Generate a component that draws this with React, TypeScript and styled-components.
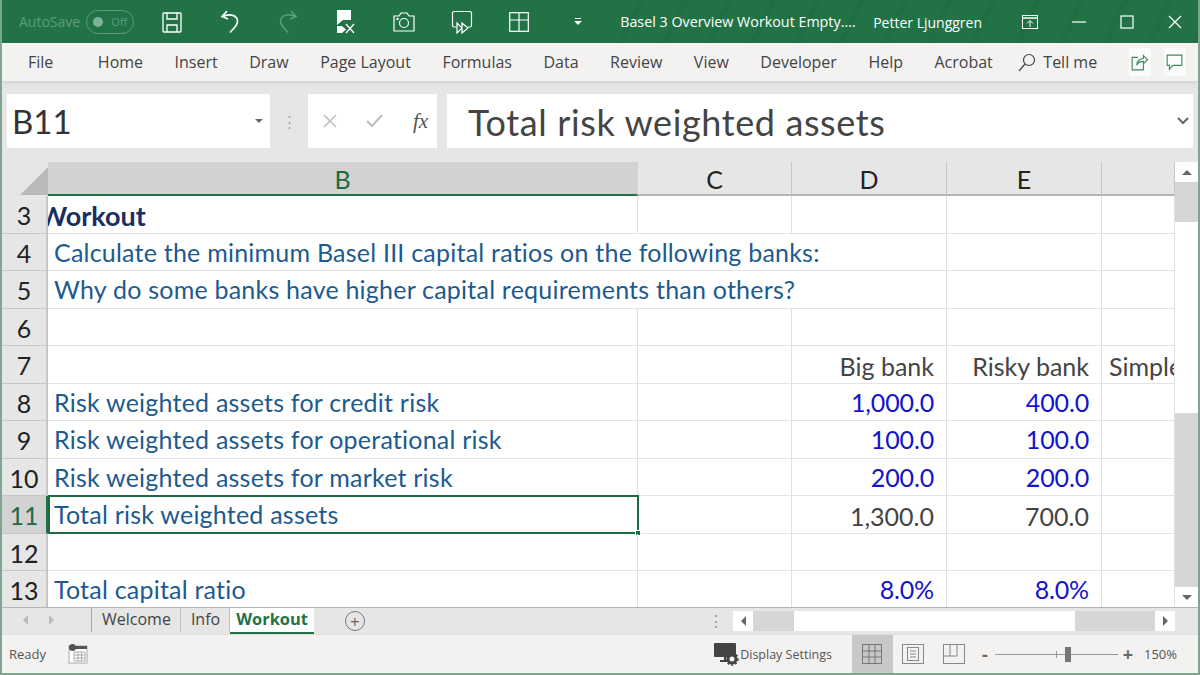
import styled, { createGlobalStyle } from "styled-components";

const GRID = "46px 590px 154px 155px 155px 73px";
const CELL_FONT = `"Lato", "Liberation Sans", sans-serif`;
const UI_FONT = `"Open Sans", "Noto Sans", sans-serif`;

const GlobalStyle = createGlobalStyle`
  html, body { margin: 0; padding: 0; background: #e6e6e6; }
  * { box-sizing: border-box; }
`;

const rows = [
  { n: "3", b: "Workout", kind: "title" },
  { n: "4", b: "Calculate the minimum Basel III capital ratios on the following banks:", wide: true },
  { n: "5", b: "Why do some banks have higher capital requirements than others?", wide: true },
  { n: "6" },
  { n: "7", d: "Big bank", e: "Risky bank", f: "Simple", plain: true },
  { n: "8", b: "Risk weighted assets for credit risk", d: "1,000.0", e: "400.0", input: true },
  { n: "9", b: "Risk weighted assets for operational risk", d: "100.0", e: "100.0", input: true },
  { n: "10", b: "Risk weighted assets for market risk", d: "200.0", e: "200.0", input: true },
  { n: "11", b: "Total risk weighted assets", d: "1,300.0", e: "700.0", plain: true, selected: true },
  { n: "12" },
  { n: "13", b: "Total capital ratio", d: "8.0%", e: "8.0%", input: true },
];

const tabs = ["Home", "Insert", "Draw", "Page Layout", "Formulas", "Data", "Review", "View", "Developer", "Help", "Acrobat"];

const App = () => {
  return (
    <Window>
      <GlobalStyle />
      <TitleBar>
        <AutoSave>AutoSave</AutoSave>
        <Toggle>
          <ToggleDot />
          Off
        </Toggle>
        <QuickIcons>
          <svg width="22" height="24" viewBox="0 0 22 24" fill="none" stroke="#fff" strokeWidth="1.3">
            <rect x="2" y="3" width="18" height="19" rx="1" />
            <path d="M6 3v6h10V3M6 22v-7h10v7M6 15h10" />
          </svg>
          <svg width="22" height="26" viewBox="0 0 22 26" fill="none" stroke="#fff" strokeWidth="1.6">
            <path d="M8 2 3 7.5l6 2.5M3.5 7.5c6-3 14-2 15 4 .6 4-3 7-7.500 12" />
          </svg>
          <svg width="22" height="26" viewBox="0 0 22 26" fill="none" stroke="#5c9e7c" strokeWidth="1.5">
            <path d="M14 2l5 5.500-6 2.500M18.500 7.500c-6-3-14-2-15 4-.6 4 3 7 7.500 12" />
          </svg>
          <svg width="22" height="26" viewBox="0 0 22 26" fill="none">
            <path d="M2 1h14v10H8l-6 5z" fill="#fff" />
            <path d="M2 17h5l4 3.500-4 3.500H2z" fill="#fff" />
            <path d="M11 15l8 9M19 15l-8 9" stroke="#fff" strokeWidth="1.300" />
          </svg>
          <svg width="22" height="20" viewBox="0 0 22 20" fill="none" stroke="#fff" strokeWidth="1.200">
            <path d="M1 4h5l2-3h6l2 3h5v15H1z" />
            <circle cx="11" cy="11" r="4.500" />
            <circle cx="4.500" cy="7" r="0.600" />
          </svg>
          <svg width="22" height="24" viewBox="0 0 22 24" fill="none" stroke="#fff" strokeWidth="1.200">
            <path d="M6 17H3a1.500 1.500 0 0 1-1.500-1.500V3A1.500 1.500 0 0 1 3 1.500h16A1.500 1.500 0 0 1 20.500 3v12.500A1.500 1.500 0 0 1 19 17h-2" />
            <path d="M6 13v10l5-5zM11 13v10l6-5z" />
          </svg>
          <svg width="20" height="20" viewBox="0 0 20 20" fill="none" stroke="#fff" strokeWidth="1.200">
            <rect x="0.700" y="0.700" width="18.600" height="18.600" />
            <path d="M10 1v18M1 8h18" />
          </svg>
          <DropIcon width="8" height="8" viewBox="0 0 8 8" fill="#fff">
            <path d="M1 0h6v1H1zM0 3h8L4 7z" />
          </DropIcon>
        </QuickIcons>
        <DocTitle>Basel 3 Overview Workout Empty....</DocTitle>
        <UserName>Petter Ljunggren</UserName>
        <WindowControls>
          <svg width="16" height="14" viewBox="0 0 16 14" fill="none" stroke="#fff" strokeWidth="1">
            <rect x="0.500" y="0.500" width="15" height="13" />
            <path d="M1 3h14" strokeWidth="1.500" />
            <path d="M8 12V6M5 8.500 8 5.500l3 3" />
          </svg>
          <svg width="14" height="14" viewBox="0 0 14 14" stroke="#fff" strokeWidth="1.200">
            <path d="M0 7h14" />
          </svg>
          <svg width="14" height="14" viewBox="0 0 14 14" fill="none" stroke="#fff" strokeWidth="1.200">
            <rect x="1" y="1" width="12" height="12" />
          </svg>
          <svg width="14" height="14" viewBox="0 0 14 14" stroke="#fff" strokeWidth="1.200">
            <path d="M1 1l12 12M13 1 1 13" />
          </svg>
        </WindowControls>
      </TitleBar>

      <TabBar>
        <FileTab>File</FileTab>
        {tabs.map((t) => (
          <Tab key={t}>{t}</Tab>
        ))}
        <TellMe>
          <svg width="18" height="19" viewBox="0 0 18 19" fill="none" stroke="#444" strokeWidth="1.200">
            <circle cx="11" cy="7" r="5.500" />
            <path d="M7 11 1 18" />
          </svg>
          Tell me
        </TellMe>
        <RibbonButtons>
          <RibbonButton>
            <svg width="17" height="17" viewBox="0 0 15 15" fill="none" stroke="#3f8a63" strokeWidth="1">
              <path d="M6 3H1v11h10V9" />
              <path d="M5 10c0-4 3-6 6-6V1.500l3.500 3.500L11 8.500V6.500c-3 0-5 1-6 3.500z" />
            </svg>
          </RibbonButton>
          <RibbonButton>
            <svg width="17" height="17" viewBox="0 0 15 15" fill="none" stroke="#3f8a63" strokeWidth="1">
              <path d="M1 1h13v9H6l-3 3.500V10H1z" />
            </svg>
          </RibbonButton>
        </RibbonButtons>
      </TabBar>

      <FormulaBar>
        <NameBox>
          B11
          <Caret />
        </NameBox>
        <Dots>⋮</Dots>
        <FormulaActions>
          <svg width="14" height="14" viewBox="0 0 14 14" stroke="#bdbdbd" strokeWidth="1.500">
            <path d="M1 1l12 12M13 1 1 13" />
          </svg>
          <svg width="18" height="14" viewBox="0 0 18 14" fill="none" stroke="#bdbdbd" strokeWidth="2">
            <path d="M1 7l5 5L16 1" />
          </svg>
          <Fx>fx</Fx>
        </FormulaActions>
        <FormulaInput>
          <FormulaText>Total risk weighted assets</FormulaText>
          <svg width="12" height="8" viewBox="0 0 12 8" fill="none" stroke="#666" strokeWidth="2">
            <path d="M1 1l5 5 5-5" />
          </svg>
        </FormulaInput>
      </FormulaBar>

      <SheetArea>
        <Sheet>
          <HeaderRow>
            <Corner>
              <svg width="28" height="28" viewBox="0 0 28 28">
                <path d="M28 0v28H0z" fill="#b9b9b9" />
              </svg>
            </Corner>
            <ColHead $active>B</ColHead>
            <ColHead>C</ColHead>
            <ColHead>D</ColHead>
            <ColHead>E</ColHead>
            <ColHead />
          </HeaderRow>
          <Body>
            {rows.map((r) => (
              <Row key={r.n}>
                <RowHead $active={r.selected}>{r.n}</RowHead>
                <BCell $span={r.wide ? 3 : 1} $clip={r.kind === "title"} $selected={r.selected}>
                  {r.kind === "title" ? <SheetTitle>{r.b}</SheetTitle> : <Label>{r.b}</Label>}
                  {r.selected && <FillHandle />}
                </BCell>
                {!r.wide && <Cell />}
                {!r.wide && (
                  <NumCell $input={r.input} $plain={r.plain}>
                    {r.d}
                  </NumCell>
                )}
                <NumCell $input={r.input} $plain={r.plain}>
                  {r.e}
                </NumCell>
                <LastCell $plain={r.plain}>{r.f}</LastCell>
              </Row>
            ))}
          </Body>
        </Sheet>
        <VScroll>
          <ScrollBtn>
            <UpArrow />
          </ScrollBtn>
          <VTrackTop />
          <VThumb />
          <VTrackBottom />
          <ScrollBtn>
            <DownArrow />
          </ScrollBtn>
        </VScroll>
      </SheetArea>

      <SheetTabs>
        <NavArrows>
          <LeftArrow $light />
          <RightArrow $light />
        </NavArrows>
        <SheetTab>Welcome</SheetTab>
        <SheetTab>Info</SheetTab>
        <ActiveSheetTab>Workout</ActiveSheetTab>
        <AddSheet>+</AddSheet>
        <Spacer />
        <HDots>⋮</HDots>
        <HScrollBtn>
          <LeftArrow />
        </HScrollBtn>
        <HTrack>
          <HThumb />
        </HTrack>
        <HScrollBtn>
          <RightArrow />
        </HScrollBtn>
      </SheetTabs>

      <StatusBar>
        <Ready>Ready</Ready>
        <svg width="20" height="20" viewBox="0 0 20 20">
          <rect x="1" y="2" width="18" height="17" fill="#fff" stroke="#aaa" />
          <rect x="1" y="2" width="18" height="3" fill="#555" />
          <circle cx="4.500" cy="3.500" r="3.500" fill="#555" />
          <path d="M6 8h11v9H6zM6 11h11M6 14h11M10 8v9M13.500 8v9" stroke="#999" fill="none" strokeWidth="0.800" />
        </svg>
        <Spacer />
        <DisplaySettings>
          <svg width="26" height="24" viewBox="0 0 26 24">
            <rect x="0" y="1" width="22" height="14" rx="1" fill="#444" />
            <path d="M6 19h10M11 15v4" stroke="#444" strokeWidth="2" />
            <circle cx="18" cy="17" r="4" fill="#f3f2f1" stroke="#444" strokeWidth="3" />
            <circle cx="18" cy="17" r="6" fill="none" stroke="#444" strokeWidth="1.500" strokeDasharray="2 2" />
          </svg>
          Display Settings
        </DisplaySettings>
        <ViewButton $active>
          <svg width="20" height="20" viewBox="0 0 20 20" fill="none" stroke="#777" strokeWidth="1">
            <rect x="0.500" y="0.500" width="19" height="19" />
            <path d="M7 0v20M13 0v20M0 7h20M0 13h20" />
          </svg>
        </ViewButton>
        <ViewButton>
          <svg width="22" height="20" viewBox="0 0 22 20" fill="none" stroke="#888" strokeWidth="1">
            <rect x="0.500" y="0.500" width="21" height="19" />
            <rect x="5.500" y="3.500" width="11" height="13" />
            <path d="M8 7h6M8 10h6M8 13h6" />
          </svg>
        </ViewButton>
        <ViewButton>
          <svg width="22" height="20" viewBox="0 0 22 20" fill="none" stroke="#888" strokeWidth="1">
            <rect x="0.500" y="0.500" width="21" height="19" />
            <path d="M0 12h14V0M7 0v12" />
          </svg>
        </ViewButton>
        <ZoomOut>-</ZoomOut>
        <ZoomSlider>
          <ZoomTick />
          <ZoomKnob />
        </ZoomSlider>
        <ZoomSign>+</ZoomSign>
        <ZoomValue>150%</ZoomValue>
      </StatusBar>
    </Window>
  );
};

const Window = styled.div`
  width: 1200px;
  height: 675px;
  overflow: hidden;
  display: flex;
  flex-direction: column;
  background: #e6e6e6;
  border-left: 2px solid #7ea58f;
  border-right: 2px solid #7ea58f;
  border-bottom: 2px solid #7ea58f;
  font-family: ${UI_FONT};
`;

const TitleBar = styled.div`
  height: 43px;
  margin: 0 -2px;
  flex: none;
  display: flex;
  align-items: center;
  padding-left: 19px;
  color: #fff;
  background:
    repeating-linear-gradient(115deg, transparent 0 34px, rgba(0, 0, 0, 0.035) 34px 40px) right / 600px 100% no-repeat,
    #217346;
`;

const AutoSave = styled.span`
  font-size: 14px;
  color: #5d9c7b;
`;

const Toggle = styled.div`
  display: flex;
  align-items: center;
  justify-content: space-between;
  width: 48px;
  height: 24px;
  margin-left: 6px;
  padding: 0 6px 0 6px;
  border: 1px solid #5d9c7b;
  border-radius: 12px;
  font-size: 11px;
  color: #5d9c7b;
`;

const ToggleDot = styled.span`
  width: 10px;
  height: 10px;
  border-radius: 50%;
  background: #7fb198;
`;

const QuickIcons = styled.div`
  display: flex;
  align-items: center;
  gap: 36px;
  width: 459px;
  margin-left: 27px;
`;

const DropIcon = styled.svg`
  margin-left: 9px;
`;

const DocTitle = styled.span`
  font-size: 14.3px;
  width: 253px;
  white-space: nowrap;
`;

const UserName = styled.span`
  font-size: 14px;
  margin-top: 2px;
  white-space: nowrap;
`;

const WindowControls = styled.div`
  display: flex;
  align-items: center;
  gap: 34px;
  margin-left: auto;
  padding-right: 18px;
`;

const TabBar = styled.div`
  height: 38px;
  flex: none;
  display: flex;
  align-items: center;
  gap: 31.5px;
  padding-left: 26px;
  background: #f3f2f1;
  box-shadow: 0 3px 3px -1px #d4d4d4;
  z-index: 1;
  color: #444;
  font-size: 16px;
`;

const Tab = styled.span`
  white-space: nowrap;
`;

const FileTab = styled(Tab)`
  margin-right: 13px;
`;

const TellMe = styled.span`
  display: flex;
  align-items: center;
  gap: 7px;
  margin-left: -6px;
  white-space: nowrap;
`;

const RibbonButtons = styled.div`
  display: flex;
  gap: 13px;
  margin-left: auto;
  padding-right: 16px;
`;

const RibbonButton = styled.div`
  width: 22px;
  height: 28px;
  background: #fbfbfb;
  display: flex;
  align-items: center;
  justify-content: center;
`;

const FormulaBar = styled.div`
  height: 81px;
  flex: none;
  display: flex;
  padding: 13px 5px 14px 5px;
`;

const NameBox = styled.div`
  width: 263px;
  background: #fff;
  display: flex;
  align-items: center;
  justify-content: space-between;
  padding: 0 7px 0 5px;
  font-family: ${CELL_FONT};
  font-size: 33px;
  color: #333;
`;

const Caret = styled.span`
  width: 0;
  height: 0;
  border-left: 4px solid transparent;
  border-right: 4px solid transparent;
  border-top: 4px solid #666;
`;

const Dots = styled.span`
  width: 38px;
  text-align: center;
  align-self: center;
  color: #aaa;
  font-size: 17px;
`;

const FormulaActions = styled.div`
  width: 129px;
  background: #fff;
  display: flex;
  align-items: center;
  gap: 29px;
  padding-left: 15px;
`;

const Fx = styled.span`
  font-family: "Liberation Serif", serif;
  font-style: italic;
  font-size: 21px;
  color: #555;
`;

const FormulaInput = styled.div`
  flex: 1;
  margin-left: 10px;
  background: #fff;
  display: flex;
  align-items: center;
  justify-content: space-between;
  padding: 0 4px 0 21px;
`;

const FormulaText = styled.span`
  font-family: ${CELL_FONT};
  font-size: 36px;
  letter-spacing: 0.62px;
  padding-top: 2px;
  color: #444;
`;

const SheetArea = styled.div`
  flex: 1;
  min-height: 0;
  display: flex;
`;

const Sheet = styled.div`
  flex: 1;
  min-width: 0;
  display: flex;
  flex-direction: column;
  overflow: hidden;
`;

const HeaderRow = styled.div`
  height: 34px;
  flex: none;
  display: grid;
  grid-template-columns: ${GRID};
`;

const Corner = styled.div`
  display: flex;
  align-items: flex-end;
  justify-content: flex-end;
  padding-bottom: 1px;
`;

const ColHead = styled.div<{ $active?: boolean }>`
  display: flex;
  align-items: center;
  justify-content: center;
  font-family: ${CELL_FONT};
  font-size: 25px;
  padding-top: 2px;
  color: ${(p) => (p.$active ? "#1e6b41" : "#222")};
  background: ${(p) => (p.$active ? "#d2d2d2" : "#e6e6e6")};
  border-bottom: 2px solid ${(p) => (p.$active ? "#217346" : "#b5b5b5")};
  border-right: 1px solid ${(p) => (p.$active ? "#d2d2d2" : "#c6c6c6")};
`;

const Body = styled.div`
  flex: 1;
  min-height: 0;
  background: #fff;
`;

const Row = styled.div`
  height: 37.5px;
  display: grid;
  grid-template-columns: ${GRID};
`;

const RowHead = styled.div<{ $active?: boolean }>`
  display: flex;
  align-items: center;
  justify-content: center;
  padding: 2px 0 0 0;
  font-family: ${CELL_FONT};
  font-size: 25px;
  color: ${(p) => (p.$active ? "#1e6b41" : "#222")};
  background: ${(p) => (p.$active ? "#d2d2d2" : "#e6e6e6")};
  border-bottom: 1px solid #c6c6c6;
  border-right: 2px solid ${(p) => (p.$active ? "#217346" : "#c6c6c6")};
`;

const Cell = styled.div`
  border-bottom: 1px solid #e4e4e4;
  border-right: 1px solid #e0e0e0;
  display: flex;
  align-items: center;
  white-space: nowrap;
  font-family: ${CELL_FONT};
  font-size: 25px;
`;

const BCell = styled(Cell)<{ $span: number; $clip?: boolean; $selected?: boolean }>`
  position: relative;
  grid-column: span ${(p) => p.$span};
  padding-left: ${(p) => (p.$clip ? 0 : p.$selected ? 4 : 6)}px;
  overflow: ${(p) => (p.$clip ? "hidden" : "visible")};
  ${(p) => p.$selected && "border: 2px solid #1e6b41; margin: -1px -1px 0 0;"}
`;

const Label = styled.span`
  color: #1d5a8e;
  letter-spacing: 0.22px;
`;

const SheetTitle = styled.span`
  margin-left: -9px;
  padding-top: 2px;
  font-size: 27px;
  font-weight: 700;
  color: #182f63;
`;

const FillHandle = styled.span`
  position: absolute;
  right: -4px;
  bottom: -4px;
  width: 6px;
  height: 6px;
  background: #1e6b41;
  border: 1px solid #fff;
`;

const NumCell = styled(Cell)<{ $input?: boolean; $plain?: boolean }>`
  justify-content: flex-end;
  padding: ${(p) => (p.$plain ? "3px" : "0")} 12px 0 0;
  letter-spacing: ${(p) => (p.$plain ? "0" : "-0.15px")};
  color: ${(p) => (p.$input ? "#1313cc" : "#444")};
`;

const LastCell = styled(Cell)<{ $plain?: boolean }>`
  padding: ${(p) => (p.$plain ? "3px" : "0")} 0 0 7px;
  overflow: hidden;
  color: #444;
`;

const VScroll = styled.div`
  width: 23px;
  flex: none;
  display: flex;
  flex-direction: column;
  background: #d6d6d6;
`;

const ScrollBtn = styled.div`
  height: 20px;
  flex: none;
  background: #fff;
  display: flex;
  align-items: center;
  justify-content: center;
`;

const VTrackTop = styled.div`
  height: 40px;
`;

const VThumb = styled.div`
  height: 191px;
  background: #fff;
`;

const VTrackBottom = styled.div`
  flex: 1;
`;

const UpArrow = styled.span`
  border-left: 5px solid transparent;
  border-right: 5px solid transparent;
  border-bottom: 5px solid #666;
`;

const DownArrow = styled.span`
  border-left: 5px solid transparent;
  border-right: 5px solid transparent;
  border-top: 5px solid #666;
`;

const LeftArrow = styled.span<{ $light?: boolean }>`
  border-top: 5px solid transparent;
  border-bottom: 5px solid transparent;
  border-right: 5px solid ${(p) => (p.$light ? "#bbb" : "#666")};
`;

const RightArrow = styled.span<{ $light?: boolean }>`
  border-top: 5px solid transparent;
  border-bottom: 5px solid transparent;
  border-left: 5px solid ${(p) => (p.$light ? "#bbb" : "#666")};
`;

const SheetTabs = styled.div`
  height: 27px;
  flex: none;
  display: flex;
  align-items: stretch;
  padding-right: 23px;
  background: #e6e6e6;
  border-top: 1px solid #b5b5b5;
  font-size: 16px;
  color: #444;
`;

const NavArrows = styled.div`
  width: 90px;
  display: flex;
  align-items: center;
  gap: 21px;
  padding-left: 21px;
  border-right: 1px solid #aaa;
  margin: 0 0 2px 0;
`;

const SheetTab = styled.div`
  display: flex;
  align-items: center;
  padding: 0 9px 3px 10px;
  border-right: 1px solid #c0c0c0;
  margin-bottom: 2px;
`;

const ActiveSheetTab = styled.div`
  display: flex;
  align-items: center;
  padding: 0 6px 3px 6px;
  background: #fff;
  color: #217346;
  font-size: 16.400px;
  font-weight: 700;
  border-bottom: 2px solid #217346;
`;

const AddSheet = styled.div`
  width: 20px;
  height: 20px;
  margin: 3px 0 0 31px;
  border: 1.500px solid #777;
  border-radius: 50%;
  display: flex;
  align-items: center;
  justify-content: center;
  font-size: 17px;
  line-height: 1;
  color: #666;
`;

const Spacer = styled.div`
  flex: 1;
`;

const HDots = styled.span`
  align-self: center;
  color: #999;
  margin-right: 9px;
`;

const HScrollBtn = styled.div`
  width: 20px;
  margin: 3px 0;
  background: #fff;
  display: flex;
  align-items: center;
  justify-content: center;
`;

const HTrack = styled.div`
  width: 402px;
  margin: 3px 0;
  padding-left: 41px;
  background: #d6d6d6;
  display: flex;
`;

const HThumb = styled.div`
  width: 281px;
  background: #fff;
`;

const StatusBar = styled.div`
  height: 39px;
  flex: none;
  display: flex;
  align-items: center;
  padding: 0 21px 0 7px;
  background: #f3f2f1;
  border-top: 1px solid #ddd;
  font-size: 13px;
  color: #555;
`;

const Ready = styled.span`
  margin-right: 22px;
`;

const DisplaySettings = styled.div`
  display: flex;
  align-items: center;
  font-size: 12.500px;
  margin-right: 20px;
`;

const ViewButton = styled.div<{ $active?: boolean }>`
  width: 41px;
  height: 100%;
  display: flex;
  align-items: center;
  justify-content: center;
  background: ${(p) => (p.$active ? "#c8c8c8" : "transparent")};
`;

const ZoomSign = styled.span`
  width: 14px;
  text-align: center;
  font-size: 18px;
  font-weight: 700;
  color: #666;
`;

const ZoomOut = styled(ZoomSign)`
  margin-left: 3px;
`;

const ZoomSlider = styled.div`
  position: relative;
  width: 123px;
  height: 1px;
  margin: 0 3px;
  background: #999;
`;

const ZoomTick = styled.span`
  position: absolute;
  left: 61px;
  top: -3px;
  width: 1px;
  height: 7px;
  background: #999;
`;

const ZoomKnob = styled.span`
  position: absolute;
  left: 70px;
  top: -7px;
  width: 6px;
  height: 15px;
  background: #777;
`;

const ZoomValue = styled.span`
  margin-left: 9px;
`;

export default App;
